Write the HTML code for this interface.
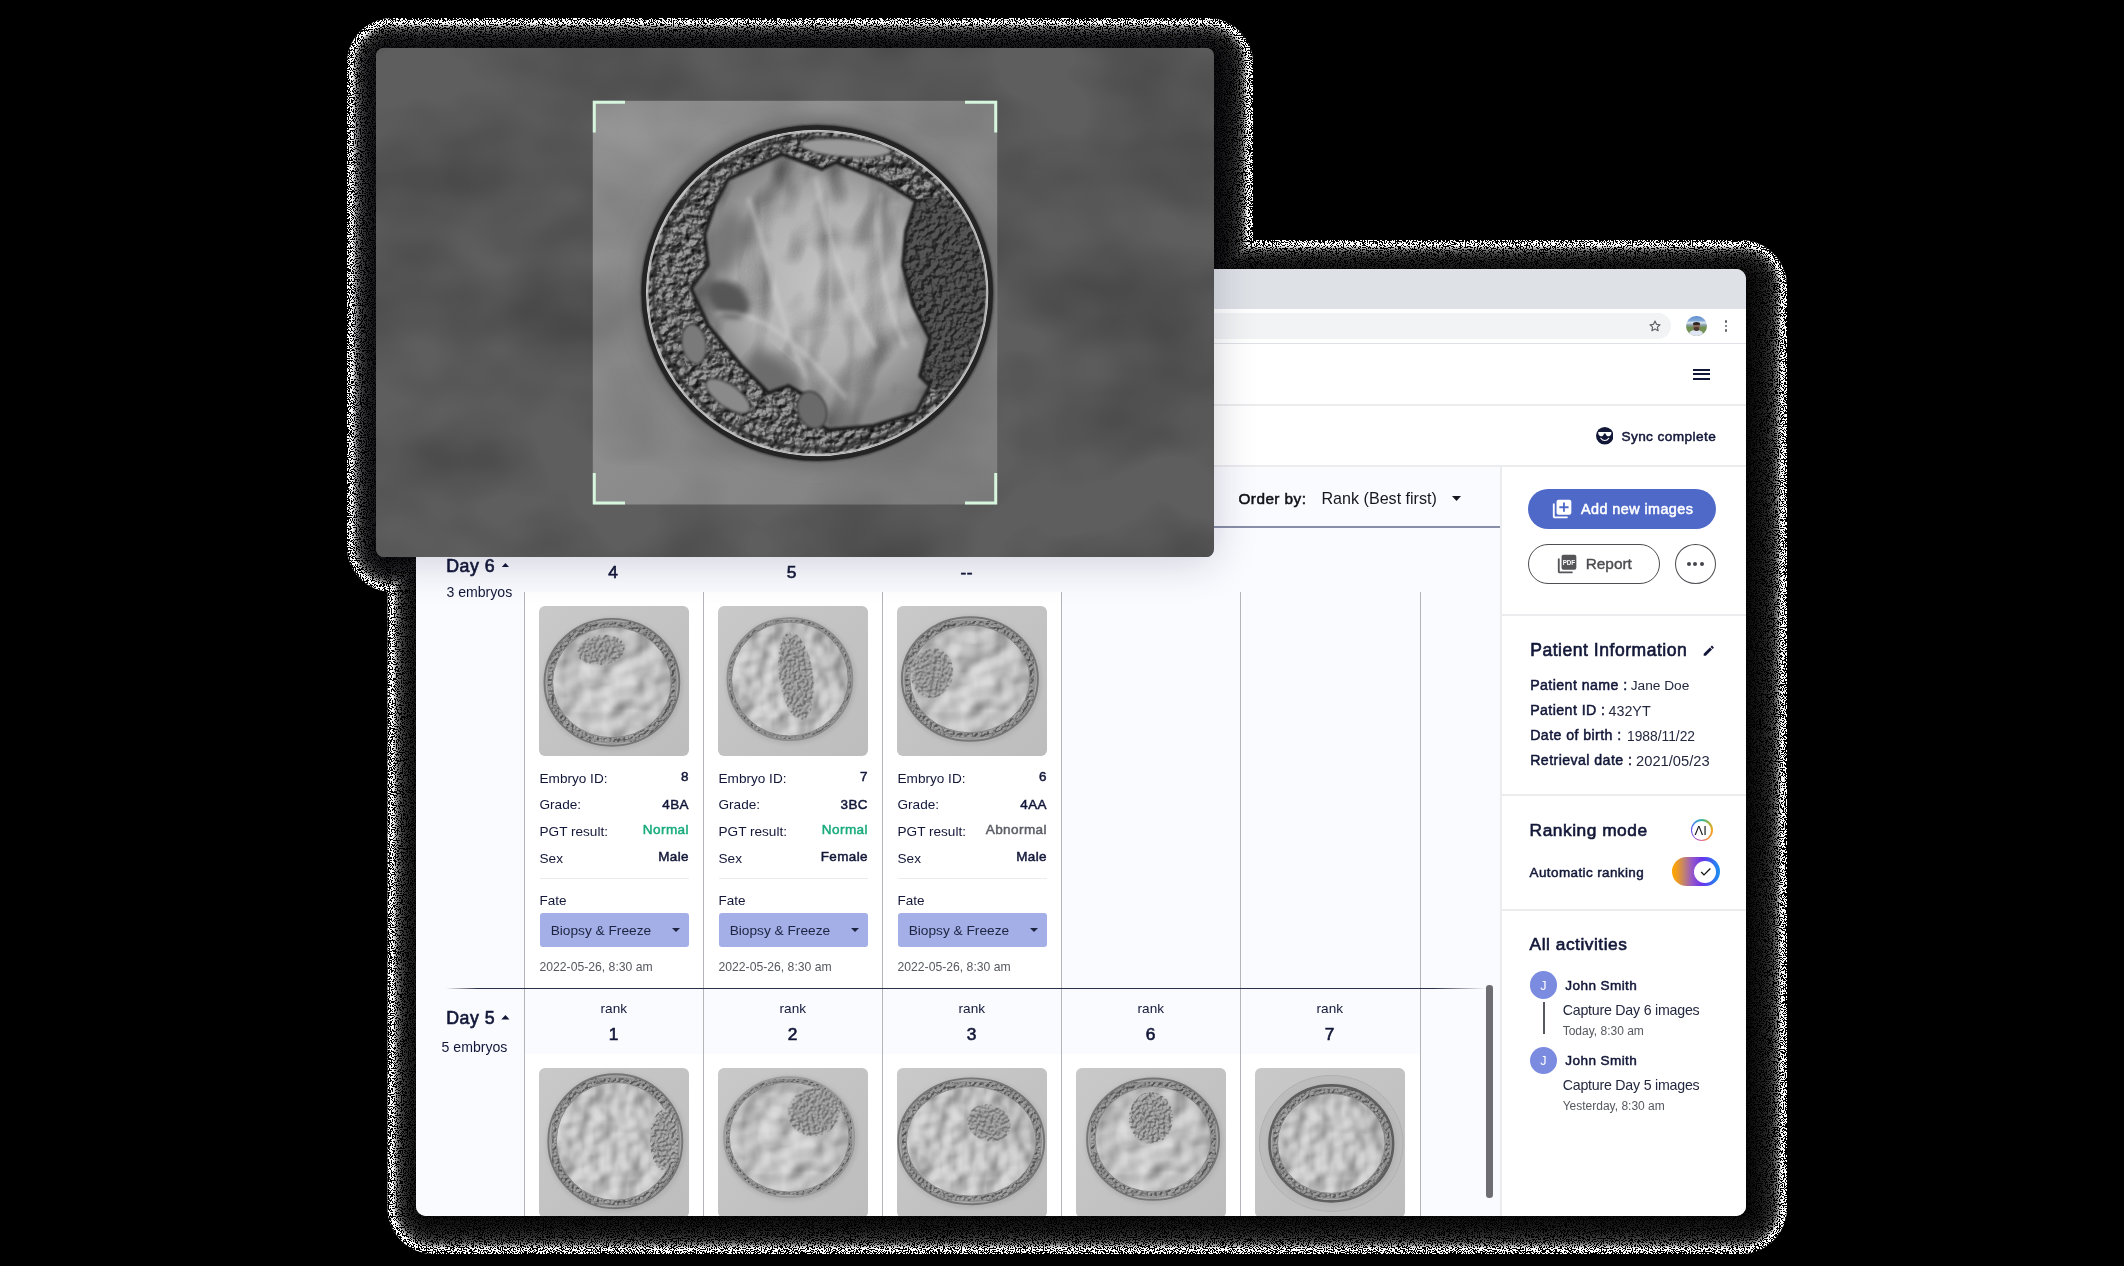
<!DOCTYPE html>
<html>
<head>
<meta charset="utf-8">
<style>
*{box-sizing:border-box;margin:0;padding:0}
html,body{width:2124px;height:1266px;background:#000;overflow:hidden}
body{font-family:"Liberation Sans",sans-serif;color:#121738;position:relative}
.abs{position:absolute}
#fringe{position:absolute;left:0;top:0;width:2124px;height:1266px}
#win{z-index:0;position:absolute;left:416px;top:269px;width:1330px;height:947px;background:#fff;border-radius:10px;overflow:hidden}
#tabs{position:absolute;left:0;top:0;width:100%;height:39.5px;background:#dee1e6}
#url{position:absolute;left:0;top:44px;width:1255px;height:26px;background:#f1f3f4;border-radius:0 13px 13px 0}
.hl{position:absolute;left:0;height:2px;background:#ececef;z-index:2}
#main{position:absolute;left:0;top:197px;width:1085px;height:750px;background:#fafbff}
#side{position:absolute;left:1084px;top:197px;width:246px;height:750px;background:#fff;border-left:2px solid #ececef}
.t{position:absolute;white-space:nowrap;line-height:1}
.b{font-weight:normal;-webkit-text-stroke:0.036em currentColor;letter-spacing:0.03em}
.c{text-align:center}
.r{text-align:right}
#ov{z-index:1;position:absolute;left:376px;top:48px;width:837.5px;height:508.8px;border-radius:8px;overflow:hidden;background:#5d5d5d;box-shadow:0 4px 44px 0 rgba(25,25,60,.2)}
</style>
</head>
<body>
<svg id="fringe" width="2124" height="1266" viewBox="0 0 2124 1266">
<defs><filter id="nz" filterUnits="userSpaceOnUse" x="330" y="0" width="1480" height="1266" color-interpolation-filters="sRGB">
<feTurbulence type="fractalNoise" baseFrequency="0.83 0.91" numOctaves="2" seed="7" result="n"/>
<feColorMatrix in="n" type="matrix" values="0 0 0 0 0 0 0 0 0 0 0 0 0 0 0 0.6 0.6 0 0 -0.1" result="a"/>
<feComponentTransfer in="a" result="th"><feFuncA type="discrete" tableValues="0 0 0 0 0 0 0 0 0 0 0 0 0 0 0 0 0 0 0 0 0 1 1 1 1 1 1 1 1 1 1 1 1 1 1 1 1 1 1 1"/></feComponentTransfer>
<feComposite in="th" in2="SourceGraphic" operator="in"/>
</filter>
<filter id="nz2" filterUnits="userSpaceOnUse" x="330" y="0" width="1480" height="1266" color-interpolation-filters="sRGB">
<feTurbulence type="fractalNoise" baseFrequency="0.77 0.87" numOctaves="2" seed="23" result="n"/>
<feColorMatrix in="n" type="matrix" values="0 0 0 0 0 0 0 0 0 0 0 0 0 0 0 0.6 0.6 0 0 -0.1" result="a"/>
<feComponentTransfer in="a" result="th"><feFuncA type="discrete" tableValues="0 0 0 0 0 0 0 0 0 0 0 1 1 1 1 1 1 1 1 1"/></feComponentTransfer>
<feComposite in="th" in2="SourceGraphic" operator="in"/>
</filter></defs>
<rect x="347.0" y="18.0" width="906.0" height="574.0" rx="45.0" fill="#ffffff"/><rect x="387.5" y="240.0" width="1399.5" height="1014.0" rx="46.0" fill="#ffffff"/>
<rect x="352.5" y="23.5" width="895.0" height="563.0" rx="39.5" fill="#eeeeee"/><rect x="393.0" y="245.5" width="1388.5" height="1003.0" rx="40.5" fill="#eeeeee"/>
<rect x="353.5" y="24.5" width="893.0" height="561.0" rx="38.5" fill="#cdcdcd"/><rect x="394.0" y="246.5" width="1386.5" height="1001.0" rx="39.5" fill="#cdcdcd"/>
<rect x="354.5" y="25.5" width="891.0" height="559.0" rx="37.5" fill="#afafaf"/><rect x="395.0" y="247.5" width="1384.5" height="999.0" rx="38.5" fill="#afafaf"/>
<rect x="355.5" y="26.5" width="889.0" height="557.0" rx="36.5" fill="#919191"/><rect x="396.0" y="248.5" width="1382.5" height="997.0" rx="37.5" fill="#919191"/>
<rect x="356.5" y="27.5" width="887.0" height="555.0" rx="35.5" fill="#7b7b7b"/><rect x="397.0" y="249.5" width="1380.5" height="995.0" rx="36.5" fill="#7b7b7b"/>
<rect x="357.5" y="28.5" width="885.0" height="553.0" rx="34.5" fill="#666666"/><rect x="398.0" y="250.5" width="1378.5" height="993.0" rx="35.5" fill="#666666"/>
<rect x="358.5" y="29.5" width="883.0" height="551.0" rx="33.5" fill="#5a5a5a"/><rect x="399.0" y="251.5" width="1376.5" height="991.0" rx="34.5" fill="#5a5a5a"/>
<rect x="359.5" y="30.5" width="881.0" height="549.0" rx="32.5" fill="#4e4e4e"/><rect x="400.0" y="252.5" width="1374.5" height="989.0" rx="33.5" fill="#4e4e4e"/>
<rect x="360.5" y="31.5" width="879.0" height="547.0" rx="31.5" fill="#424242"/><rect x="401.0" y="253.5" width="1372.5" height="987.0" rx="32.5" fill="#424242"/>
<rect x="361.5" y="32.5" width="877.0" height="545.0" rx="30.5" fill="#3c3c3c"/><rect x="402.0" y="254.5" width="1370.5" height="985.0" rx="31.5" fill="#3c3c3c"/>
<rect x="363.0" y="34.0" width="874.0" height="542.0" rx="29.0" fill="#343434"/><rect x="403.5" y="256.0" width="1367.5" height="982.0" rx="30.0" fill="#343434"/>
<rect x="364.5" y="35.5" width="871.0" height="539.0" rx="27.5" fill="#2c2c2c"/><rect x="405.0" y="257.5" width="1364.5" height="979.0" rx="28.5" fill="#2c2c2c"/>
<rect x="366.0" y="37.0" width="868.0" height="536.0" rx="26.0" fill="#272727"/><rect x="406.5" y="259.0" width="1361.5" height="976.0" rx="27.0" fill="#272727"/>
<rect x="368.0" y="39.0" width="864.0" height="532.0" rx="24.0" fill="#212121"/><rect x="408.5" y="261.0" width="1357.5" height="972.0" rx="25.0" fill="#212121"/>
<rect x="370.0" y="41.0" width="860.0" height="528.0" rx="22.0" fill="#1d1d1d"/><rect x="410.5" y="263.0" width="1353.5" height="968.0" rx="23.0" fill="#1d1d1d"/>
<rect x="372.0" y="43.0" width="856.0" height="524.0" rx="20.0" fill="#1a1a1a"/><rect x="412.5" y="265.0" width="1349.5" height="964.0" rx="21.0" fill="#1a1a1a"/>
<rect x="374.5" y="45.5" width="851.0" height="519.0" rx="17.5" fill="#161616"/><rect x="415.0" y="267.5" width="1344.5" height="959.0" rx="18.5" fill="#161616"/>
<rect x="377.0" y="48.0" width="846.0" height="514.0" rx="15.0" fill="#131313"/><rect x="417.5" y="270.0" width="1339.5" height="954.0" rx="16.0" fill="#131313"/>
<rect x="380.0" y="51.0" width="840.0" height="508.0" rx="12.0" fill="#0f0f0f"/><rect x="420.5" y="273.0" width="1333.5" height="948.0" rx="13.0" fill="#0f0f0f"/>
<rect x="383.0" y="54.0" width="834.0" height="502.0" rx="9.0" fill="#0c0c0c"/><rect x="423.5" y="276.0" width="1327.5" height="942.0" rx="10.0" fill="#0c0c0c"/>
<rect x="386.0" y="57.0" width="828.0" height="496.0" rx="6.0" fill="#080808"/><rect x="426.5" y="279.0" width="1321.5" height="936.0" rx="7.0" fill="#080808"/>
<g filter="url(#nz)"><rect x="347.0" y="18.0" width="906.0" height="574.0" rx="45.0" fill="#000"/><rect x="387.5" y="240.0" width="1399.5" height="1014.0" rx="46.0" fill="#000"/></g>
<g filter="url(#nz2)"><rect x="348.0" y="19.0" width="904.0" height="572.0" rx="44.0" fill="none" stroke="#000" stroke-width="2.4"/><rect x="388.5" y="241.0" width="1397.5" height="1012.0" rx="45.0" fill="none" stroke="#000" stroke-width="2.4"/></g>
</svg>
<div id="win">
 <div id="tabs"></div>
 <div id="url"></div>
 <!-- star -->
<svg class="abs" style="left:1231.5px;top:50px" width="14" height="14" viewBox="0 0 24 24"><path d="M12 3.6l2.6 5.6 6 .7-4.5 4.1 1.2 6-5.3-3-5.3 3 1.2-6L3.4 9.9l6-.7z" fill="none" stroke="#5f6368" stroke-width="2" stroke-linejoin="round"/></svg>
<!-- avatar -->
<div class="abs" style="left:1270px;top:46.7px;width:20.6px;height:20.6px;border-radius:50%;overflow:hidden;background:linear-gradient(180deg,#5e8fd0 0%,#7fa6d8 22%,#dfe6ee 34%,#8fa4b8 44%,#6f8f4e 58%,#7d9560 100%)">
 <div class="abs" style="left:6.6px;top:7.2px;width:7.2px;height:8px;border-radius:45%;background:#8a6a58"></div>
 <div class="abs" style="left:6.8px;top:6.4px;width:7px;height:3.4px;border-radius:50% 50% 20% 20%;background:#2c2522"></div>
 <div class="abs" style="left:3.2px;top:14.6px;width:14px;height:9px;border-radius:45% 45% 0 0;background:#dfe5f3"></div>
 <div class="abs" style="left:8px;top:11.6px;width:4.6px;height:3.6px;border-radius:40%;background:#4a3a33"></div>
</div>
<!-- kebab -->
<div class="abs" style="left:1308.5px;top:51.4px;width:2.8px;height:2.8px;border-radius:50%;background:#5f6368"></div>
<div class="abs" style="left:1308.5px;top:55.7px;width:2.8px;height:2.8px;border-radius:50%;background:#5f6368"></div>
<div class="abs" style="left:1308.5px;top:60px;width:2.8px;height:2.8px;border-radius:50%;background:#5f6368"></div>
<!-- hamburger -->
<div class="abs" style="left:1277px;top:99.7px;width:17.2px;height:2px;background:#121738"></div>
<div class="abs" style="left:1277px;top:104.3px;width:17.2px;height:2px;background:#121738"></div>
<div class="abs" style="left:1277px;top:108.9px;width:17.2px;height:2px;background:#121738"></div>
<!-- sync complete -->
<svg class="abs" style="left:1179.8px;top:158.3px" width="17.6" height="17.6" viewBox="0 0 24 24"><circle cx="12" cy="12" r="12" fill="#121738"/><path d="M3.600 6.900h16.800c.500 0 .800.400.700.900-.300 2.800-1.700 4.800-4 4.800-2.200 0-3.600-1.500-4-3.900h-2.200c-.400 2.400-1.800 3.900-4 3.900-2.300 0-3.700-2-4-4.800-.100-.500.200-.900.700-.900z" fill="#fff"/><path d="M6.600 15.300c1.300 2 3.200 3.100 5.400 3.100s4.100-1.100 5.400-3.100" fill="none" stroke="#fff" stroke-width="1.500" stroke-linecap="round"/></svg>
<div class="t b" style="left:1205.4px;top:161.1px;font-size:13.65px;color:#121738">Sync complete</div>

 <div class="hl" style="top:74px;width:100%;height:1px;background:#e0e1e6"></div>
 <div class="hl" style="top:135px;width:100%"></div>
 <div class="hl" style="top:196px;width:100%"></div>
 <div id="main">
 <svg width="0" height="0" style="position:absolute"><defs>
<filter id="relief" x="0" y="0" width="100%" height="100%" color-interpolation-filters="sRGB">
<feTurbulence type="fractalNoise" baseFrequency="0.038" numOctaves="2" seed="4" result="h"/>
<feDiffuseLighting in="h" surfaceScale="5.5" diffuseConstant="1.05" lighting-color="#ffffff" result="l"><feDistantLight azimuth="225" elevation="52"/></feDiffuseLighting>
<feComposite in="l" in2="SourceGraphic" operator="in"/>
</filter>
<filter id="relief2" x="0" y="0" width="100%" height="100%" color-interpolation-filters="sRGB">
<feTurbulence type="fractalNoise" baseFrequency="0.045" numOctaves="2" seed="11" result="h"/>
<feDiffuseLighting in="h" surfaceScale="5" diffuseConstant="1.05" lighting-color="#ffffff" result="l"><feDistantLight azimuth="200" elevation="52"/></feDiffuseLighting>
<feComposite in="l" in2="SourceGraphic" operator="in"/>
</filter>
<filter id="grain" x="0" y="0" width="100%" height="100%" color-interpolation-filters="sRGB">
<feTurbulence type="fractalNoise" baseFrequency="0.35" numOctaves="2" seed="5" result="h"/>
<feDiffuseLighting in="h" surfaceScale="5" diffuseConstant="0.95" lighting-color="#ffffff" result="l"><feDistantLight azimuth="225" elevation="50"/></feDiffuseLighting>
<feComposite in="l" in2="SourceGraphic" operator="in"/>
</filter>
<filter id="bgtex" x="0" y="0" width="100%" height="100%" color-interpolation-filters="sRGB">
<feTurbulence type="fractalNoise" baseFrequency="0.012 0.05" numOctaves="2" seed="2" result="h"/>
<feColorMatrix in="h" type="matrix" values="0 0 0 0 0.76  0 0 0 0 0.76  0 0 0 0 0.76  0.5 0 0 0 0.35" />
</filter>
<filter id="soft"><feGaussianBlur stdDeviation="0.7"/></filter>
<filter id="soft2"><feGaussianBlur stdDeviation="2.2"/></filter>
</defs></svg>
<div class="t b" style="left:822.5px;top:24.5px;font-size:15.3px;color:#111318;">Order by:</div>
<div class="t" style="left:905.5px;top:24.1px;font-size:16.1px;color:#15181f;">Rank (Best first)</div>
<svg class="abs" style="left:1035.7px;top:29.5px" width="9" height="5" viewBox="0 0 9 5"><path d="M0 0h9L4.5 5z" fill="#15181f"/></svg>
<div class="abs" style="left:0.0px;top:60.0px;width:1085.0px;height:2.0px;background:#8a8fa8;"></div>
<div class="abs" style="left:109.0px;top:126.0px;width:536.0px;height:397.0px;background:#fff;"></div>
<div class="abs" style="left:109.0px;top:588.0px;width:895.0px;height:170.0px;background:#fff;"></div>
<div class="abs" style="left:108.0px;top:126.0px;width:1.0px;height:630.0px;background:#b4b5bb;"></div>
<div class="abs" style="left:287.0px;top:126.0px;width:1.0px;height:630.0px;background:#b4b5bb;"></div>
<div class="abs" style="left:466.0px;top:126.0px;width:1.0px;height:630.0px;background:#b4b5bb;"></div>
<div class="abs" style="left:645.0px;top:126.0px;width:1.0px;height:630.0px;background:#b4b5bb;"></div>
<div class="abs" style="left:824.0px;top:126.0px;width:1.0px;height:630.0px;background:#b4b5bb;"></div>
<div class="abs" style="left:1004.0px;top:126.0px;width:1.0px;height:630.0px;background:#b4b5bb;"></div>
<div class="abs" style="left:30.0px;top:522.0px;width:1040.0px;height:1.0px;background:linear-gradient(90deg,rgba(43,48,74,0) 0,#2b304a 3%,#2b304a 95%,rgba(43,48,74,0) 100%);"></div>
<div class="abs" style="left:1070.2px;top:518.7px;width:6.6px;height:213.7px;background:#6e6e72;border-radius:3.3px"></div>
<div class="t b" style="left:30.2px;top:91.5px;font-size:17.75px;">Day 6</div>
<svg class="abs" style="left:84.8px;top:96.8px" width="8.8" height="4.6" viewBox="0 0 9 5"><path d="M0 5h9L4.500 0z" fill="#121738"/></svg>
<div class="t" style="left:30.4px;top:118.8px;font-size:14.1px;">3 embryos</div>
<div class="t b" style="left:30.2px;top:544.0px;font-size:17.75px;">Day 5</div>
<svg class="abs" style="left:84.8px;top:549.3px" width="8.8" height="4.6" viewBox="0 0 9 5"><path d="M0 5h9L4.500 0z" fill="#121738"/></svg>
<div class="t" style="left:25.6px;top:574.2px;font-size:14.1px;">5 embryos</div>
<div class="t c" style="left:157.4px;top:73.9px;font-size:13.6px;width:80px;">rank</div>
<div class="t b c" style="left:157.4px;top:97.7px;font-size:17.34px;width:80px;">4</div>
<div class="t c" style="left:335.8px;top:73.9px;font-size:13.6px;width:80px;">rank</div>
<div class="t b c" style="left:335.8px;top:97.7px;font-size:17.34px;width:80px;">5</div>
<div class="t c" style="left:510.7px;top:73.9px;font-size:13.6px;width:80px;">rank</div>
<div class="t b c" style="left:510.7px;top:97.7px;font-size:17.34px;width:80px;">--</div>
<div class="t c" style="left:157.8px;top:536.2px;font-size:13.6px;width:80px;">rank</div>
<div class="t b c" style="left:157.8px;top:560.0px;font-size:17.34px;width:80px;">1</div>
<div class="t c" style="left:336.8px;top:536.2px;font-size:13.6px;width:80px;">rank</div>
<div class="t b c" style="left:336.8px;top:560.0px;font-size:17.34px;width:80px;">2</div>
<div class="t c" style="left:515.8px;top:536.2px;font-size:13.6px;width:80px;">rank</div>
<div class="t b c" style="left:515.8px;top:560.0px;font-size:17.34px;width:80px;">3</div>
<div class="t c" style="left:694.8px;top:536.2px;font-size:13.6px;width:80px;">rank</div>
<div class="t b c" style="left:694.8px;top:560.0px;font-size:17.34px;width:80px;">6</div>
<div class="t c" style="left:873.8px;top:536.2px;font-size:13.6px;width:80px;">rank</div>
<div class="t b c" style="left:873.8px;top:560.0px;font-size:17.34px;width:80px;">7</div>
<div class="t" style="left:123.5px;top:305.7px;font-size:13.6px;">Embryo ID:</div>
<div class="t r b" style="left:123.5px;width:149.5px;top:303.8px;font-size:13.46px;">8</div>
<div class="t" style="left:123.5px;top:332.1px;font-size:13.6px;">Grade:</div>
<div class="t r b" style="left:123.5px;width:149.5px;top:331.8px;font-size:13.46px;">4BA</div>
<div class="t" style="left:123.5px;top:359.0px;font-size:13.6px;">PGT result:</div>
<div class="t r b" style="left:123.5px;width:149.5px;top:356.8px;font-size:13.57px;color:#19ab7c;">Normal</div>
<div class="t" style="left:123.5px;top:385.5px;font-size:13.6px;">Sex</div>
<div class="t r b" style="left:123.5px;width:149.5px;top:383.8px;font-size:13.46px;">Male</div>
<div class="abs" style="left:123.5px;top:412.0px;width:149.5px;height:1.0px;background:#ececf0;"></div>
<div class="t" style="left:123.5px;top:428.1px;font-size:13.5px;">Fate</div>
<div class="abs" style="left:123.5px;top:447.4px;width:149.5px;height:33.4px;background:#a4aee7;border-radius:3px"></div>
<div class="t" style="left:134.7px;top:458.0px;font-size:13.7px;color:#1d2440;">Biopsy &amp; Freeze</div>
<svg class="abs" style="left:256.0px;top:462.4px" width="8" height="4.2" viewBox="0 0 8 4"><path d="M0 0h8L4 4z" fill="#1d2440"/></svg>
<div class="t" style="left:123.5px;top:494.8px;font-size:12.2px;color:#55585f;">2022-05-26, 8:30 am</div>
<div class="t" style="left:302.5px;top:305.7px;font-size:13.6px;">Embryo ID:</div>
<div class="t r b" style="left:302.5px;width:149.5px;top:303.8px;font-size:13.46px;">7</div>
<div class="t" style="left:302.5px;top:332.1px;font-size:13.6px;">Grade:</div>
<div class="t r b" style="left:302.5px;width:149.5px;top:331.8px;font-size:13.46px;">3BC</div>
<div class="t" style="left:302.5px;top:359.0px;font-size:13.6px;">PGT result:</div>
<div class="t r b" style="left:302.5px;width:149.5px;top:356.8px;font-size:13.57px;color:#19ab7c;">Normal</div>
<div class="t" style="left:302.5px;top:385.5px;font-size:13.6px;">Sex</div>
<div class="t r b" style="left:302.5px;width:149.5px;top:383.8px;font-size:13.46px;">Female</div>
<div class="abs" style="left:302.5px;top:412.0px;width:149.5px;height:1.0px;background:#ececf0;"></div>
<div class="t" style="left:302.5px;top:428.1px;font-size:13.5px;">Fate</div>
<div class="abs" style="left:302.5px;top:447.4px;width:149.5px;height:33.4px;background:#a4aee7;border-radius:3px"></div>
<div class="t" style="left:313.7px;top:458.0px;font-size:13.7px;color:#1d2440;">Biopsy &amp; Freeze</div>
<svg class="abs" style="left:435.0px;top:462.4px" width="8" height="4.2" viewBox="0 0 8 4"><path d="M0 0h8L4 4z" fill="#1d2440"/></svg>
<div class="t" style="left:302.5px;top:494.8px;font-size:12.2px;color:#55585f;">2022-05-26, 8:30 am</div>
<div class="t" style="left:481.5px;top:305.7px;font-size:13.6px;">Embryo ID:</div>
<div class="t r b" style="left:481.5px;width:149.5px;top:303.8px;font-size:13.46px;">6</div>
<div class="t" style="left:481.5px;top:332.1px;font-size:13.6px;">Grade:</div>
<div class="t r b" style="left:481.5px;width:149.5px;top:331.8px;font-size:13.46px;">4AA</div>
<div class="t" style="left:481.5px;top:359.0px;font-size:13.6px;">PGT result:</div>
<div class="t r b" style="left:481.5px;width:149.5px;top:356.8px;font-size:13.57px;color:#5c5e66;">Abnormal</div>
<div class="t" style="left:481.5px;top:385.5px;font-size:13.6px;">Sex</div>
<div class="t r b" style="left:481.5px;width:149.5px;top:383.8px;font-size:13.46px;">Male</div>
<div class="abs" style="left:481.5px;top:412.0px;width:149.5px;height:1.0px;background:#ececf0;"></div>
<div class="t" style="left:481.5px;top:428.1px;font-size:13.5px;">Fate</div>
<div class="abs" style="left:481.5px;top:447.4px;width:149.5px;height:33.4px;background:#a4aee7;border-radius:3px"></div>
<div class="t" style="left:492.7px;top:458.0px;font-size:13.7px;color:#1d2440;">Biopsy &amp; Freeze</div>
<svg class="abs" style="left:614.0px;top:462.4px" width="8" height="4.2" viewBox="0 0 8 4"><path d="M0 0h8L4 4z" fill="#1d2440"/></svg>
<div class="t" style="left:481.5px;top:494.8px;font-size:12.2px;color:#55585f;">2022-05-26, 8:30 am</div>
<svg class="abs" style="left:123.3px;top:140.2px;border-radius:6px" width="150" height="150" viewBox="0 0 150 150"><defs><clipPath id="cpa"><ellipse cx="72.9" cy="76.3" rx="66.4" ry="62.4"/></clipPath><linearGradient id="bga" x1="0" y1="0" x2="1" y2="1"><stop offset="0" stop-color="#c9c9c9"/><stop offset="0.5" stop-color="#c3c3c3"/><stop offset="1" stop-color="#bdbdbd"/></linearGradient><radialGradient id="ina" cx="0.45" cy="0.55" r="0.6"><stop offset="0" stop-color="#e0e0e0"/><stop offset="0.7" stop-color="#d6d6d6"/><stop offset="1" stop-color="#bababa"/></radialGradient></defs><rect width="150" height="150" fill="url(#bga)"/><ellipse cx="73.9" cy="77.8" rx="69.9" ry="65.9" fill="#b0b0b0" filter="url(#soft2)"/><ellipse cx="72.9" cy="76.3" rx="67.4" ry="63.4" fill="url(#ina)"/><g clip-path="url(#cpa)" opacity="0.6" style="mix-blend-mode:multiply"><rect width="150" height="150" fill="#fff" filter="url(#relief)"/></g><ellipse cx="72.9" cy="76.3" rx="63.400000000000006" ry="59.4" fill="none" stroke="#a2a2a2" stroke-width="8" opacity="0.75" filter="url(#soft)"/><g opacity="0.5" style="mix-blend-mode:multiply"><ellipse cx="72.9" cy="76.3" rx="63.400000000000006" ry="59.4" fill="none" stroke="#fff" stroke-width="8" filter="url(#grain)"/></g><ellipse cx="72.9" cy="76.3" rx="59.400000000000006" ry="55.4" fill="none" stroke="#858585" stroke-width="1" filter="url(#soft)"/><g clip-path="url(#cpa)"><ellipse cx="62" cy="44" rx="24" ry="15" transform="rotate(-8 62 44)" fill="#b0b0b0" filter="url(#soft2)"/><g opacity="0.4" style="mix-blend-mode:multiply"><ellipse cx="62" cy="44" rx="24" ry="15" transform="rotate(-8 62 44)" fill="#fff" filter="url(#grain)"/></g></g><ellipse cx="72.9" cy="76.3" rx="67.4" ry="63.4" fill="none" stroke="#767676" stroke-width="1.9"/><ellipse cx="72.9" cy="76.3" rx="64.80000000000001" ry="60.8" fill="none" stroke="#8e8e8e" stroke-width="1"/></svg>
<svg class="abs" style="left:302.3px;top:140.2px;border-radius:6px" width="150" height="150" viewBox="0 0 150 150"><defs><clipPath id="cpb"><ellipse cx="71.9" cy="73.1" rx="61.4" ry="60"/></clipPath><linearGradient id="bgb" x1="0" y1="0" x2="1" y2="1"><stop offset="0" stop-color="#c9c9c9"/><stop offset="0.5" stop-color="#c3c3c3"/><stop offset="1" stop-color="#bdbdbd"/></linearGradient><radialGradient id="inb" cx="0.45" cy="0.55" r="0.6"><stop offset="0" stop-color="#e0e0e0"/><stop offset="0.7" stop-color="#d6d6d6"/><stop offset="1" stop-color="#bababa"/></radialGradient></defs><rect width="150" height="150" fill="url(#bgb)"/><ellipse cx="72.9" cy="74.6" rx="64.9" ry="63.5" fill="#b0b0b0" filter="url(#soft2)"/><ellipse cx="71.9" cy="73.1" rx="62.4" ry="61" fill="url(#inb)"/><g clip-path="url(#cpb)" opacity="0.6" style="mix-blend-mode:multiply"><rect width="150" height="150" fill="#fff" filter="url(#relief2)"/></g><ellipse cx="71.9" cy="73.1" rx="60.4" ry="59.0" fill="none" stroke="#a2a2a2" stroke-width="4" opacity="0.75" filter="url(#soft)"/><g opacity="0.5" style="mix-blend-mode:multiply"><ellipse cx="71.9" cy="73.1" rx="60.4" ry="59.0" fill="none" stroke="#fff" stroke-width="4" filter="url(#grain)"/></g><ellipse cx="71.9" cy="73.1" rx="58.4" ry="57" fill="none" stroke="#858585" stroke-width="1" filter="url(#soft)"/><g clip-path="url(#cpb)"><ellipse cx="78" cy="70" rx="17" ry="44" transform="rotate(-8 78 70)" fill="#b0b0b0" filter="url(#soft2)"/><g opacity="0.4" style="mix-blend-mode:multiply"><ellipse cx="78" cy="70" rx="17" ry="44" transform="rotate(-8 78 70)" fill="#fff" filter="url(#grain)"/></g></g><ellipse cx="71.9" cy="73.1" rx="62.4" ry="61" fill="none" stroke="#8c8c8c" stroke-width="1.9"/><ellipse cx="71.9" cy="73.1" rx="59.8" ry="58.4" fill="none" stroke="#8e8e8e" stroke-width="1"/></svg>
<svg class="abs" style="left:481.3px;top:140.2px;border-radius:6px" width="150" height="150" viewBox="0 0 150 150"><defs><clipPath id="cpc"><ellipse cx="72.9" cy="73" rx="67" ry="60.8"/></clipPath><linearGradient id="bgc" x1="0" y1="0" x2="1" y2="1"><stop offset="0" stop-color="#c9c9c9"/><stop offset="0.5" stop-color="#c3c3c3"/><stop offset="1" stop-color="#bdbdbd"/></linearGradient><radialGradient id="inc" cx="0.45" cy="0.55" r="0.6"><stop offset="0" stop-color="#e0e0e0"/><stop offset="0.7" stop-color="#d6d6d6"/><stop offset="1" stop-color="#bababa"/></radialGradient></defs><rect width="150" height="150" fill="url(#bgc)"/><ellipse cx="73.9" cy="74.5" rx="70.5" ry="64.3" fill="#b0b0b0" filter="url(#soft2)"/><ellipse cx="72.9" cy="73" rx="68" ry="61.8" fill="url(#inc)"/><g clip-path="url(#cpc)" opacity="0.6" style="mix-blend-mode:multiply"><rect width="150" height="150" fill="#fff" filter="url(#relief)"/></g><ellipse cx="72.9" cy="73" rx="64.0" ry="57.8" fill="none" stroke="#a2a2a2" stroke-width="8" opacity="0.75" filter="url(#soft)"/><g opacity="0.5" style="mix-blend-mode:multiply"><ellipse cx="72.9" cy="73" rx="64.0" ry="57.8" fill="none" stroke="#fff" stroke-width="8" filter="url(#grain)"/></g><ellipse cx="72.9" cy="73" rx="60" ry="53.8" fill="none" stroke="#858585" stroke-width="1" filter="url(#soft)"/><g clip-path="url(#cpc)"><ellipse cx="35" cy="67" rx="21" ry="25" transform="rotate(10 35 67)" fill="#b0b0b0" filter="url(#soft2)"/><g opacity="0.4" style="mix-blend-mode:multiply"><ellipse cx="35" cy="67" rx="21" ry="25" transform="rotate(10 35 67)" fill="#fff" filter="url(#grain)"/></g></g><ellipse cx="72.9" cy="73" rx="68" ry="61.8" fill="none" stroke="#767676" stroke-width="1.9"/><ellipse cx="72.9" cy="73" rx="65.4" ry="59.199999999999996" fill="none" stroke="#8e8e8e" stroke-width="1"/></svg>
<svg class="abs" style="left:123.3px;top:602.2px;border-radius:6px" width="150" height="150" viewBox="0 0 150 150"><defs><clipPath id="cpd"><ellipse cx="76.3" cy="73.3" rx="66" ry="66"/></clipPath><linearGradient id="bgd" x1="0" y1="0" x2="1" y2="1"><stop offset="0" stop-color="#c9c9c9"/><stop offset="0.5" stop-color="#c3c3c3"/><stop offset="1" stop-color="#bdbdbd"/></linearGradient><radialGradient id="ind" cx="0.45" cy="0.55" r="0.6"><stop offset="0" stop-color="#e0e0e0"/><stop offset="0.7" stop-color="#d6d6d6"/><stop offset="1" stop-color="#bababa"/></radialGradient></defs><rect width="150" height="150" fill="url(#bgd)"/><ellipse cx="77.3" cy="74.8" rx="69.5" ry="69.5" fill="#b0b0b0" filter="url(#soft2)"/><ellipse cx="76.3" cy="73.3" rx="67" ry="67" fill="url(#ind)"/><g clip-path="url(#cpd)" opacity="0.6" style="mix-blend-mode:multiply"><rect width="150" height="150" fill="#fff" filter="url(#relief2)"/></g><ellipse cx="76.3" cy="73.3" rx="63.0" ry="63.0" fill="none" stroke="#a2a2a2" stroke-width="8" opacity="0.75" filter="url(#soft)"/><g opacity="0.5" style="mix-blend-mode:multiply"><ellipse cx="76.3" cy="73.3" rx="63.0" ry="63.0" fill="none" stroke="#fff" stroke-width="8" filter="url(#grain)"/></g><ellipse cx="76.3" cy="73.3" rx="59" ry="59" fill="none" stroke="#858585" stroke-width="1" filter="url(#soft)"/><g clip-path="url(#cpd)"><ellipse cx="125" cy="72" rx="14" ry="30" transform="rotate(0 125 72)" fill="#b0b0b0" filter="url(#soft2)"/><g opacity="0.4" style="mix-blend-mode:multiply"><ellipse cx="125" cy="72" rx="14" ry="30" transform="rotate(0 125 72)" fill="#fff" filter="url(#grain)"/></g></g><ellipse cx="76.3" cy="73.3" rx="67" ry="67" fill="none" stroke="#767676" stroke-width="1.9"/><ellipse cx="76.3" cy="73.3" rx="64.4" ry="64.4" fill="none" stroke="#8e8e8e" stroke-width="1"/></svg>
<svg class="abs" style="left:302.3px;top:602.2px;border-radius:6px" width="150" height="150" viewBox="0 0 150 150"><defs><clipPath id="cpe"><ellipse cx="71.2" cy="69.1" rx="64" ry="59"/></clipPath><linearGradient id="bge" x1="0" y1="0" x2="1" y2="1"><stop offset="0" stop-color="#c9c9c9"/><stop offset="0.5" stop-color="#c3c3c3"/><stop offset="1" stop-color="#bdbdbd"/></linearGradient><radialGradient id="ine" cx="0.45" cy="0.55" r="0.6"><stop offset="0" stop-color="#e0e0e0"/><stop offset="0.7" stop-color="#d6d6d6"/><stop offset="1" stop-color="#bababa"/></radialGradient></defs><rect width="150" height="150" fill="url(#bge)"/><ellipse cx="72.2" cy="70.6" rx="67.5" ry="62.5" fill="#b0b0b0" filter="url(#soft2)"/><ellipse cx="71.2" cy="69.1" rx="65" ry="60" fill="url(#ine)"/><g clip-path="url(#cpe)" opacity="0.6" style="mix-blend-mode:multiply"><rect width="150" height="150" fill="#fff" filter="url(#relief)"/></g><ellipse cx="71.2" cy="69.1" rx="62.5" ry="57.5" fill="none" stroke="#a2a2a2" stroke-width="5" opacity="0.75" filter="url(#soft)"/><g opacity="0.5" style="mix-blend-mode:multiply"><ellipse cx="71.2" cy="69.1" rx="62.5" ry="57.5" fill="none" stroke="#fff" stroke-width="5" filter="url(#grain)"/></g><ellipse cx="71.2" cy="69.1" rx="60" ry="55" fill="none" stroke="#858585" stroke-width="1" filter="url(#soft)"/><g clip-path="url(#cpe)"><ellipse cx="96" cy="44" rx="26" ry="24" transform="rotate(-10 96 44)" fill="#b0b0b0" filter="url(#soft2)"/><g opacity="0.4" style="mix-blend-mode:multiply"><ellipse cx="96" cy="44" rx="26" ry="24" transform="rotate(-10 96 44)" fill="#fff" filter="url(#grain)"/></g></g><ellipse cx="71.2" cy="69.1" rx="65" ry="60" fill="none" stroke="#9a9a9a" stroke-width="1.9"/><ellipse cx="71.2" cy="69.1" rx="62.4" ry="57.4" fill="none" stroke="#8e8e8e" stroke-width="1"/></svg>
<svg class="abs" style="left:481.3px;top:602.2px;border-radius:6px" width="150" height="150" viewBox="0 0 150 150"><defs><clipPath id="cpf"><ellipse cx="74.2" cy="73.3" rx="72" ry="61.9"/></clipPath><linearGradient id="bgf" x1="0" y1="0" x2="1" y2="1"><stop offset="0" stop-color="#c9c9c9"/><stop offset="0.5" stop-color="#c3c3c3"/><stop offset="1" stop-color="#bdbdbd"/></linearGradient><radialGradient id="inf" cx="0.45" cy="0.55" r="0.6"><stop offset="0" stop-color="#e0e0e0"/><stop offset="0.7" stop-color="#d6d6d6"/><stop offset="1" stop-color="#bababa"/></radialGradient></defs><rect width="150" height="150" fill="url(#bgf)"/><ellipse cx="75.2" cy="74.8" rx="75.5" ry="65.4" fill="#b0b0b0" filter="url(#soft2)"/><ellipse cx="74.2" cy="73.3" rx="73" ry="62.9" fill="url(#inf)"/><g clip-path="url(#cpf)" opacity="0.6" style="mix-blend-mode:multiply"><rect width="150" height="150" fill="#fff" filter="url(#relief2)"/></g><ellipse cx="74.2" cy="73.3" rx="69.0" ry="58.9" fill="none" stroke="#a2a2a2" stroke-width="8" opacity="0.75" filter="url(#soft)"/><g opacity="0.5" style="mix-blend-mode:multiply"><ellipse cx="74.2" cy="73.3" rx="69.0" ry="58.9" fill="none" stroke="#fff" stroke-width="8" filter="url(#grain)"/></g><ellipse cx="74.2" cy="73.3" rx="65" ry="54.9" fill="none" stroke="#858585" stroke-width="1" filter="url(#soft)"/><g clip-path="url(#cpf)"><ellipse cx="92" cy="55" rx="22" ry="18" transform="rotate(20 92 55)" fill="#b0b0b0" filter="url(#soft2)"/><g opacity="0.4" style="mix-blend-mode:multiply"><ellipse cx="92" cy="55" rx="22" ry="18" transform="rotate(20 92 55)" fill="#fff" filter="url(#grain)"/></g></g><ellipse cx="74.2" cy="73.3" rx="73" ry="62.9" fill="none" stroke="#767676" stroke-width="1.9"/><ellipse cx="74.2" cy="73.3" rx="70.4" ry="60.3" fill="none" stroke="#8e8e8e" stroke-width="1"/></svg>
<svg class="abs" style="left:660.3px;top:602.2px;border-radius:6px" width="150" height="150" viewBox="0 0 150 150"><defs><clipPath id="cpg"><ellipse cx="77.1" cy="71.2" rx="65" ry="59.7"/></clipPath><linearGradient id="bgg" x1="0" y1="0" x2="1" y2="1"><stop offset="0" stop-color="#c9c9c9"/><stop offset="0.5" stop-color="#c3c3c3"/><stop offset="1" stop-color="#bdbdbd"/></linearGradient><radialGradient id="ing" cx="0.45" cy="0.55" r="0.6"><stop offset="0" stop-color="#e0e0e0"/><stop offset="0.7" stop-color="#d6d6d6"/><stop offset="1" stop-color="#bababa"/></radialGradient></defs><rect width="150" height="150" fill="url(#bgg)"/><ellipse cx="78.1" cy="72.7" rx="68.5" ry="63.2" fill="#b0b0b0" filter="url(#soft2)"/><ellipse cx="77.1" cy="71.2" rx="66" ry="60.7" fill="url(#ing)"/><g clip-path="url(#cpg)" opacity="0.6" style="mix-blend-mode:multiply"><rect width="150" height="150" fill="#fff" filter="url(#relief)"/></g><ellipse cx="77.1" cy="71.2" rx="62.0" ry="56.7" fill="none" stroke="#a2a2a2" stroke-width="8" opacity="0.75" filter="url(#soft)"/><g opacity="0.5" style="mix-blend-mode:multiply"><ellipse cx="77.1" cy="71.2" rx="62.0" ry="56.7" fill="none" stroke="#fff" stroke-width="8" filter="url(#grain)"/></g><ellipse cx="77.1" cy="71.2" rx="58" ry="52.7" fill="none" stroke="#858585" stroke-width="1" filter="url(#soft)"/><g clip-path="url(#cpg)"><ellipse cx="75" cy="50" rx="22" ry="26" transform="rotate(0 75 50)" fill="#b0b0b0" filter="url(#soft2)"/><g opacity="0.4" style="mix-blend-mode:multiply"><ellipse cx="75" cy="50" rx="22" ry="26" transform="rotate(0 75 50)" fill="#fff" filter="url(#grain)"/></g></g><ellipse cx="77.1" cy="71.2" rx="66" ry="60.7" fill="none" stroke="#767676" stroke-width="1.9"/><ellipse cx="77.1" cy="71.2" rx="63.4" ry="58.1" fill="none" stroke="#8e8e8e" stroke-width="1"/></svg>
<svg class="abs" style="left:839.3px;top:602.2px;border-radius:6px" width="150" height="150" viewBox="0 0 150 150"><defs><clipPath id="cph"><ellipse cx="76.3" cy="75.4" rx="60.8" ry="57"/></clipPath><linearGradient id="bgh" x1="0" y1="0" x2="1" y2="1"><stop offset="0" stop-color="#c9c9c9"/><stop offset="0.5" stop-color="#c3c3c3"/><stop offset="1" stop-color="#bdbdbd"/></linearGradient><radialGradient id="inh" cx="0.45" cy="0.55" r="0.6"><stop offset="0" stop-color="#e0e0e0"/><stop offset="0.7" stop-color="#d6d6d6"/><stop offset="1" stop-color="#bababa"/></radialGradient></defs><rect width="150" height="150" fill="url(#bgh)"/><ellipse cx="76.3" cy="75.4" rx="71.8" ry="68" fill="#bcbcbc" stroke="#b0b0b0" stroke-width="1" filter="url(#soft)"/><ellipse cx="77.3" cy="76.9" rx="64.3" ry="60.5" fill="#b0b0b0" filter="url(#soft2)"/><ellipse cx="76.3" cy="75.4" rx="61.8" ry="58" fill="url(#inh)"/><g clip-path="url(#cph)" opacity="0.6" style="mix-blend-mode:multiply"><rect width="150" height="150" fill="#fff" filter="url(#relief2)"/></g><ellipse cx="76.3" cy="75.4" rx="57.8" ry="54.0" fill="none" stroke="#a2a2a2" stroke-width="8" opacity="0.75" filter="url(#soft)"/><g opacity="0.5" style="mix-blend-mode:multiply"><ellipse cx="76.3" cy="75.4" rx="57.8" ry="54.0" fill="none" stroke="#fff" stroke-width="8" filter="url(#grain)"/></g><ellipse cx="76.3" cy="75.4" rx="53.8" ry="50" fill="none" stroke="#858585" stroke-width="1" filter="url(#soft)"/><ellipse cx="76.3" cy="75.4" rx="61.8" ry="58" fill="none" stroke="#5e5e5e" stroke-width="2.6"/><ellipse cx="76.3" cy="75.4" rx="59.199999999999996" ry="55.4" fill="none" stroke="#8e8e8e" stroke-width="1"/></svg>
 </div>
 <div id="side">
 <div class="abs" style="left:26.0px;top:22.8px;width:187.6px;height:40.2px;background:#4f69c9;border-radius:20.1px"></div>
<svg class="abs" style="left:49.1px;top:31.8px" width="22.2" height="22.2" viewBox="0 0 24 24"><path d="M4 6H2v14c0 1.100.9 2 2 2h14v-2H4V6zm16-4H8c-1.100 0-2 .9-2 2v12c0 1.100.9 2 2 2h12c1.100 0 2-.9 2-2V4c0-1.100-.9-2-2-2zm-1 9h-4v4h-2v-4H9V9h4V5h2v4h4v2z" fill="#fff"/></svg>
<div class="t b" style="left:79.0px;top:36.2px;font-size:14.38px;color:#fff;">Add new images</div>
<div class="abs" style="left:26.2px;top:78.4px;width:131.6px;height:40.0px;background:#fff;border-radius:20px;border:1px solid #4d4d52"></div>
<svg class="abs" style="left:53.8px;top:87.3px" width="22.2" height="22.2" viewBox="0 0 24 24"><path d="M4 6H2v14c0 1.100.9 2 2 2h14v-2H4V6z" fill="#555558"/><rect x="6" y="2" width="16" height="16" rx="2" fill="#555558"/><text x="14" y="12.600" font-family="Liberation Sans" font-weight="bold" font-size="6.800" fill="#fff" text-anchor="middle">PDF</text></svg>
<div class="t" style="left:83.7px;top:89.7px;font-size:15.4px;color:#4c4c50;-webkit-text-stroke:0.4px #4c4c50;">Report</div>
<div class="abs" style="left:173.2px;top:78.4px;width:40.4px;height:40.0px;background:#fff;border-radius:50%;border:1px solid #4d4d52"></div>
<div class="abs" style="left:185.2px;top:96.4px;width:4.0px;height:4.0px;background:#45464c;border-radius:50%"></div>
<div class="abs" style="left:191.4px;top:96.4px;width:4.0px;height:4.0px;background:#45464c;border-radius:50%"></div>
<div class="abs" style="left:197.6px;top:96.4px;width:4.0px;height:4.0px;background:#45464c;border-radius:50%"></div>
<div class="abs" style="left:0.0px;top:147.8px;width:244.0px;height:2.0px;background:#ececef;"></div>
<div class="abs" style="left:0.0px;top:327.7px;width:244.0px;height:2.0px;background:#ececef;"></div>
<div class="abs" style="left:0.0px;top:442.6px;width:244.0px;height:2.0px;background:#ececef;"></div>
<div class="t b" style="left:28.2px;top:175.9px;font-size:17.54px;">Patient Information</div>
<svg class="abs" style="left:200.0px;top:178.0px" width="13.5" height="13.5" viewBox="0 0 24 24"><path d="M3 17.250V21h3.750L17.810 9.940l-3.750-3.750L3 17.250zM20.710 7.040a1 1 0 0 0 0-1.410l-2.340-2.340a1 1 0 0 0-1.410 0l-1.830 1.830 3.750 3.750 1.830-1.830z" fill="#121738"/></svg>
<div class="t b" style="left:28.2px;top:212.2px;font-size:14.18px;">Patient name :</div>
<div class="t" style="left:128.7px;top:213.4px;font-size:13.7px;color:#23283f;">Jane Doe</div>
<div class="t b" style="left:28.2px;top:236.9px;font-size:14.18px;">Patient ID :</div>
<div class="t" style="left:106.5px;top:237.8px;font-size:14.3px;color:#23283f;">432YT</div>
<div class="t b" style="left:28.2px;top:262.4px;font-size:14.18px;">Date of birth :</div>
<div class="t" style="left:125.0px;top:263.6px;font-size:13.8px;color:#23283f;">1988/11/22</div>
<div class="t b" style="left:28.2px;top:287.1px;font-size:14.18px;">Retrieval date :</div>
<div class="t" style="left:134.1px;top:287.8px;font-size:14.7px;color:#23283f;">2021/05/23</div>
<div class="t b" style="left:27.6px;top:356.0px;font-size:17.34px;">Ranking mode</div>
<div class="abs" style="left:188.6px;top:353.1px;width:22.2px;height:22.2px;border-radius:50%;background:conic-gradient(from 0deg,#35b79c 0deg,#9db544 40deg,#f5a623 90deg,#f08a3a 150deg,#e0609a 185deg,#8a3fe0 225deg,#5a4fe8 270deg,#3a8de8 315deg,#35b79c 360deg)"></div>
<div class="abs" style="left:190.0px;top:354.5px;width:19.3px;height:19.3px;background:#fff;border-radius:50%"></div>
<div class="t" style="left:192.6px;top:358.2px;font-size:13px;color:#15161c;">&Lambda;I</div>
<div class="t b" style="left:27.6px;top:399.9px;font-size:13.46px;">Automatic ranking</div>
<div class="abs" style="left:170.1px;top:391.1px;width:48.1px;height:29.4px;background:linear-gradient(90deg,#ffa400 0%,#f7a010 8%,#c4846a 24%,#9657c8 42%,#6a35ec 62%,#4a52f0 76%,#2a7cf0 90%,#1a92f0 100%);border-radius:14.7px"></div>
<div class="abs" style="left:192.0px;top:394.6px;width:22.1px;height:22.1px;background:#fff;border-radius:50%"></div>
<svg class="abs" style="left:196.6px;top:399.2px" width="13" height="13" viewBox="0 0 24 24"><path d="M4 13l5.200 5.200L21 6.500" fill="none" stroke="#111" stroke-width="2.300"/></svg>
<div class="t b" style="left:27.6px;top:470.3px;font-size:17.34px;">All activities</div>
<div class="abs" style="left:27.7px;top:505.3px;width:27.6px;height:27.6px;background:#7b8be0;border-radius:50%"></div>
<div class="t" style="left:38.3px;top:513.6px;font-size:12.5px;color:#fff;">J</div>
<div class="t b" style="left:63.3px;top:513.3px;font-size:13.57px;">John Smith</div>
<div class="t" style="left:60.7px;top:536.7px;font-size:14.2px;color:#23283f;letter-spacing:-0.22px;">Capture Day 6 images</div>
<div class="t" style="left:60.7px;top:559.1px;font-size:12px;color:#55585f;">Today, 8:30 am</div>
<div class="abs" style="left:27.7px;top:580.5px;width:27.6px;height:27.6px;background:#7b8be0;border-radius:50%"></div>
<div class="t" style="left:38.3px;top:588.8px;font-size:12.5px;color:#fff;">J</div>
<div class="t b" style="left:63.3px;top:588.3px;font-size:13.57px;">John Smith</div>
<div class="t" style="left:60.7px;top:611.5px;font-size:14.2px;color:#23283f;letter-spacing:-0.22px;">Capture Day 5 images</div>
<div class="t" style="left:60.7px;top:633.7px;font-size:12px;color:#55585f;">Yesterday, 8:30 am</div>
<div class="abs" style="left:40.6px;top:536.4px;width:2.0px;height:31.8px;background:#55585f;"></div>
 </div>
</div>
<div id="ov">
<svg class="abs" style="left:0;top:0" width="837.5" height="509.5" viewBox="0 0 837.5 509.5">
<defs>
<filter id="obg" x="0" y="0" width="100%" height="100%" color-interpolation-filters="sRGB">
<feTurbulence type="fractalNoise" baseFrequency="0.007 0.010" numOctaves="3" seed="9" result="h"/>
<feColorMatrix in="h" type="matrix" values="0 0 0 0 0  0 0 0 0 0  0 0 0 0 0  1.600 0 0 0 -0.550"/>
</filter>
<filter id="ocav" x="0" y="0" width="100%" height="100%" color-interpolation-filters="sRGB">
<feTurbulence type="fractalNoise" baseFrequency="0.022 0.016" numOctaves="2" seed="21" result="h"/>
<feDiffuseLighting in="h" surfaceScale="11" diffuseConstant="1.150" lighting-color="#fff" result="l"><feDistantLight azimuth="215" elevation="55"/></feDiffuseLighting>
<feComposite in="l" in2="SourceGraphic" operator="in"/>
</filter>
<filter id="ogr" x="0" y="0" width="100%" height="100%" color-interpolation-filters="sRGB">
<feTurbulence type="fractalNoise" baseFrequency="0.170" numOctaves="3" seed="3" result="h"/>
<feDiffuseLighting in="h" surfaceScale="6" diffuseConstant="1.150" lighting-color="#fff" result="l"><feDistantLight azimuth="225" elevation="48"/></feDiffuseLighting>
<feComposite in="l" in2="SourceGraphic" operator="in"/>
</filter>
<filter id="ogr2" x="0" y="0" width="100%" height="100%" color-interpolation-filters="sRGB">
<feTurbulence type="fractalNoise" baseFrequency="0.090 0.110" numOctaves="2" seed="14" result="h"/>
<feDiffuseLighting in="h" surfaceScale="7" diffuseConstant="1.150" lighting-color="#fff" result="l"><feDistantLight azimuth="225" elevation="50"/></feDiffuseLighting>
<feComposite in="l" in2="SourceGraphic" operator="in"/>
</filter>
<filter id="ob3"><feGaussianBlur stdDeviation="3"/></filter>
<filter id="ob6"><feGaussianBlur stdDeviation="7"/></filter>
<filter id="ob1"><feGaussianBlur stdDeviation="1.100"/></filter>
<filter id="ob2"><feGaussianBlur stdDeviation="2"/></filter>
<clipPath id="ocl"><ellipse cx="441.200" cy="245" rx="170" ry="162"/></clipPath>
<clipPath id="osq"><rect x="216.800" y="52.800" width="404.400" height="403.700"/></clipPath>
<clipPath id="ocv"><path d="M352 131 L406 106 L446 121 L460 114 L507 133 L540 153 L530 183 L527 217 L537 257 L554 291 L544 328 L554 338 L540 365 L497 378 L453 382 L439.500 375 L436 351.500 L412.600 338 L392.400 345 L365.500 318 L332 277.500 L315 240.500 L332 217 L328.500 186.700 L338.600 156.400 Z"/></clipPath>
<radialGradient id="ocg" gradientUnits="userSpaceOnUse" cx="450" cy="235" r="135"><stop offset="0" stop-color="#c4c4c4"/><stop offset="0.600" stop-color="#b2b2b2"/><stop offset="1" stop-color="#868686"/></radialGradient>
<linearGradient id="osg" x1="0" y1="0" x2="1" y2="1"><stop offset="0" stop-color="#999"/><stop offset="0.500" stop-color="#8c8c8c"/><stop offset="1" stop-color="#7e7e7e"/></linearGradient>
</defs>
<rect width="837.5" height="509.5" fill="#5e5e5e"/>
<rect width="837.5" height="509.5" fill="#404040" filter="url(#obg)" opacity="0.300"/>
<rect x="216.800" y="52.800" width="404.400" height="403.700" fill="url(#osg)"/>
<g clip-path="url(#osq)">
<rect x="216.800" y="52.800" width="404.400" height="403.700" fill="#606060" filter="url(#obg)" opacity="0.220"/>
<ellipse cx="441.200" cy="245" rx="184" ry="176" fill="#737373" filter="url(#ob6)"/>
<ellipse cx="441.200" cy="245" rx="176.500" ry="168.500" fill="#303030" filter="url(#ob1)"/>
<ellipse cx="441.200" cy="245" rx="171.500" ry="163.500" fill="#c2c2c2"/>
<g clip-path="url(#ocl)">
<rect x="260" y="70" width="370" height="350" fill="#9c9c9c"/>
<g style="mix-blend-mode:multiply" opacity="0.750"><rect x="260" y="70" width="370" height="350" fill="#fff" filter="url(#ogr2)"/></g>
<g style="mix-blend-mode:multiply" opacity="0.600"><rect x="260" y="70" width="370" height="350" fill="#fff" filter="url(#ogr)"/></g>
<ellipse cx="441.200" cy="245" rx="164" ry="156" fill="none" stroke="#2c2c2c" stroke-width="2.600" filter="url(#ob1)"/>
<!-- ICM -->
<path d="M540 153 C575 135 603 175 611 215 C618 262 610 312 590 338 C575 345 560 342 554 338 L544 328 L554 291 L537 257 L527 217 L530 183 Z" fill="#242424" filter="url(#ob1)"/>
<g style="mix-blend-mode:screen" opacity="0.230"><path d="M540 153 C575 135 603 175 611 215 C618 262 610 312 590 338 C575 345 560 342 554 338 L544 328 L554 291 L537 257 L527 217 L530 183 Z" fill="#fff" filter="url(#ogr)"/></g>
<!-- cavity -->
<g clip-path="url(#ocv)">
<rect x="300" y="95" width="270" height="300" fill="url(#ocg)"/>
<g style="mix-blend-mode:multiply" opacity="0.800"><rect x="300" y="95" width="270" height="300" fill="#fff" filter="url(#ocav)"/></g>
<ellipse cx="352" cy="251" rx="24" ry="16" transform="rotate(38 352 251)" fill="#565656" filter="url(#ob3)"/>
<ellipse cx="395" cy="330" rx="30" ry="22" transform="rotate(40 395 330)" fill="#6c6c6c" filter="url(#ob6)"/>
<ellipse cx="350" cy="195" rx="16" ry="34" transform="rotate(15 350 195)" fill="#777" filter="url(#ob6)"/>
<path d="M372 150 C392 200 398 260 430 330 M440 130 C452 190 470 250 500 300 M505 145 C498 200 510 260 530 300 M340 265 C380 260 420 290 470 350" fill="none" stroke="#dadada" stroke-width="3.500" opacity="0.500" filter="url(#ob2)"/>
</g>
<path d="M352 131 L406 106 L446 121 L460 114 L507 133 L540 153 L530 183 L527 217 L537 257 L554 291 L544 328 L554 338 L540 365 L497 378 L453 382 L439.500 375 L436 351.500 L412.600 338 L392.400 345 L365.500 318 L332 277.500 L315 240.500 L332 217 L328.500 186.700 L338.600 156.400 Z" fill="none" stroke="#1c1c1c" stroke-width="3.600" stroke-linejoin="round" filter="url(#ob1)"/>
<ellipse cx="436" cy="362" rx="14" ry="19" transform="rotate(-20 436 362)" fill="#6a6a6a" stroke="#333" stroke-width="1.500" filter="url(#ob1)"/>
<ellipse cx="318" cy="296" rx="12" ry="20" transform="rotate(-10 318 296)" fill="#7a7a7a" stroke="#3a3a3a" stroke-width="1.500" filter="url(#ob1)"/>
<ellipse cx="352" cy="348" rx="26" ry="11" transform="rotate(35 352 348)" fill="#8a8a8a" stroke="#333" stroke-width="1.500" filter="url(#ob1)"/>
<ellipse cx="470" cy="100" rx="45" ry="9" transform="rotate(4 470 100)" fill="#9a9a9a" stroke="#333" stroke-width="1.500" filter="url(#ob1)"/>
</g>
<ellipse cx="441.200" cy="245" rx="173.500" ry="165.500" fill="none" stroke="#242424" stroke-width="4.500"/>
<ellipse cx="441.200" cy="245" rx="169.500" ry="161.500" fill="none" stroke="#cacaca" stroke-width="1.500" opacity="0.800"/>
</g>
<g fill="none" stroke="#d6f6de" stroke-width="3">
<path d="M218.300 84.500V54.300H249"/><path d="M589 54.300H619.700V84.500"/><path d="M218.300 425V455H249"/><path d="M589 455H619.700V425"/>
</g>
</svg>
</div>
</body>
</html>
